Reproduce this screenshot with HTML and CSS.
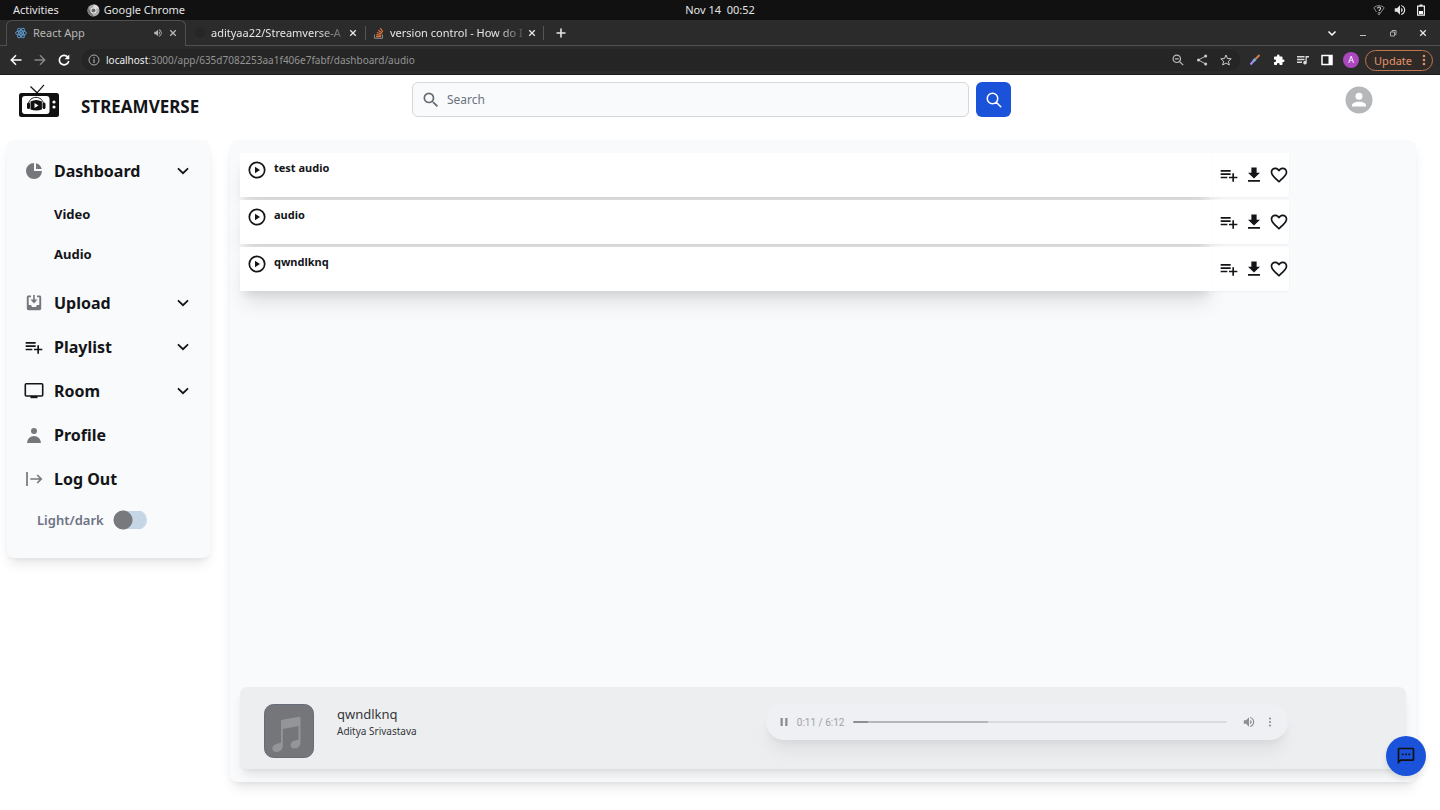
FILE: index.html
```
<!DOCTYPE html>
<html lang="en">
<head>
<meta charset="utf-8">
<meta name="viewport" content="width=device-width, initial-scale=1">
<title>Streamverse</title>
<link rel="stylesheet" href="styles.css">
</head>
<body>
<svg class="sprite" aria-hidden="true">
  <symbol id="close" viewBox="0 0 10 10"><path d="M1.500 1.500l7 7M8.500 1.500l-7 7" stroke="currentColor" stroke-width="1.600" fill="none"/></symbol>
  <symbol id="chevron" viewBox="0 0 20 20"><path fill="none" stroke="currentColor" stroke-width="1.800" stroke-linecap="round" d="M5.500 7.800l4.500 4.400 4.500-4.400"/></symbol>
  <symbol id="playlist-add" viewBox="0 0 24 24"><path fill="currentColor" d="M14 10H2v2h12v-2zm0-4H2v2h12V6zm4 8v-4h-2v4h-4v2h4v4h2v-4h4v-2h-4zM2 16h8v-2H2v2z"/></symbol>
  <symbol id="download" viewBox="0 0 24 24"><path fill="currentColor" d="M20 9h-4.500V2h-7v7H4l8 7.500L20 9zM4 18.500V21h16v-2.500H4z"/></symbol>
  <symbol id="heart" viewBox="0 0 24 24"><path fill="currentColor" d="M16.500 3c-1.740 0-3.410.810-4.500 2.090C10.910 3.810 9.240 3 7.500 3 4.420 3 2 5.420 2 8.500c0 3.780 3.400 6.860 8.550 11.540L12 21.350l1.450-1.320C18.600 15.360 22 12.280 22 8.500 22 5.420 19.580 3 16.500 3zm-4.400 15.550l-.1.100-.1-.1C7.140 14.240 4 11.390 4 8.500 4 6.500 5.500 5 7.500 5c1.540 0 3.040.990 3.570 2.360h1.870C13.460 5.990 14.960 5 16.500 5c2 0 3.500 1.500 3.500 3.500 0 2.890-3.140 5.740-7.900 10.050z"/></symbol>
  <symbol id="play-circle" viewBox="0 0 20 20"><circle cx="10" cy="10" r="7.700" fill="none" stroke="currentColor" stroke-width="1.700"/><path d="M8 6.700v6.600l5-3.300z" fill="currentColor"/></symbol>
  <symbol id="volume" viewBox="0 0 24 24"><path fill="currentColor" d="M3 9v6h4l5 5V4L7 9H3zm13.500 3c0-1.770-1.020-3.290-2.500-4.030v8.050c1.480-.730 2.500-2.250 2.500-4.020zM14 3.230v2.060c2.890.860 5 3.540 5 6.710s-2.110 5.850-5 6.710v2.060c4.010-.910 7-4.490 7-8.770s-2.990-7.860-7-8.770z"/></symbol>
  <symbol id="dots" viewBox="0 0 24 24"><circle cx="12" cy="5" r="2.200"/><circle cx="12" cy="12" r="2.200"/><circle cx="12" cy="19" r="2.200"/></symbol>
</svg>

<div class="system-bar">
  <div class="system-left">
    <span>Activities</span>
    <span class="system-app"><svg class="i13" viewBox="0 0 14 14"><circle cx="7" cy="7" r="6.500" fill="#aaa"/><path d="M7 7V.5A6.500 6.500 0 0 1 13 5H7z" fill="#ddd"/><path d="M1.300 4L5 9l2 4.500A6.500 6.500 0 0 1 1.300 4z" fill="#777"/><circle cx="7" cy="7" r="3.200" fill="#eee"/><circle cx="7" cy="7" r="2.200" fill="#666"/></svg>Google Chrome</span>
  </div>
  <time>Nov 14&nbsp; 00:52</time>
  <div class="system-right">
    <svg class="i12" viewBox="0 0 12 12"><path d="M3.500 8L.8 3.700C3.700 1 8.300 1 11.200 3.700L6 11 4.800 9.400" fill="none" stroke="#999" stroke-width=".9"/><path d="M4.600 4.600c0-2 3-2 3-.2 0 1.200-1.500 1.200-1.500 2.600M6 8v1.200" fill="none" stroke="#ddd" stroke-width="1.100"/></svg>
    <svg class="i14"><use href="#volume"/></svg>
    <svg class="i12" viewBox="0 0 12 12"><path d="M4.500 1h3M2.600 2.200h6.800v9H2.600z" fill="none" stroke="#eee" stroke-width="1.200"/><path d="M4 7h4v3H4z" fill="#fff"/></svg>
  </div>
</div>

<div class="tab-strip">
  <div class="tab tab-active">
    <svg class="i12" viewBox="0 0 12 12" fill="none" stroke="#5d9fd6" stroke-width=".9"><ellipse cx="6" cy="6" rx="5.400" ry="2.100"/><ellipse cx="6" cy="6" rx="5.400" ry="2.100" transform="rotate(60 6 6)"/><ellipse cx="6" cy="6" rx="5.400" ry="2.100" transform="rotate(120 6 6)"/><circle cx="6" cy="6" r=".7" fill="#5d9fd6"/></svg>
    <span class="tab-title">React App</span>
    <svg class="i10"><use href="#volume"/></svg>
    <button class="bare" aria-label="Close React App"><svg class="i8"><use href="#close"/></svg></button>
  </div>
  <div class="tab">
    <svg class="i12" viewBox="0 0 12 12"><circle cx="6" cy="6" r="5" fill="#262626"/></svg>
    <span class="tab-title tab-fade">adityaa22/Streamverse-A</span>
    <button class="bare" aria-label="Close adityaa22"><svg class="i8"><use href="#close"/></svg></button>
  </div>
  <div class="tab tab-ruled">
    <svg class="i12" viewBox="0 0 12 12" fill="none"><path d="M1.500 7.500v3.800h8V7.500" stroke="#8a8a8a"/><path d="M3 9.600h5M3.200 7.700l5 .6M3.900 5.500l4.700 1.500M5.200 3.300l4 2.700M7.300 1l2.500 3.800" stroke="#e0713a" stroke-width="1.200"/></svg>
    <span class="tab-title tab-fade">version control - How do I</span>
    <button class="bare" aria-label="Close version control"><svg class="i8"><use href="#close"/></svg></button>
  </div>
  <button class="bare new-tab" aria-label="New tab"><svg class="i10" viewBox="0 0 10 10"><path d="M5 .5v9M.5 5h9" stroke="currentColor" stroke-width="1.600"/></svg></button>
  <div class="window-buttons">
    <button class="bare" aria-label="Search tabs"><svg class="i10" viewBox="0 0 10 10"><path d="M1.500 3.500L5 7l3.500-3.500" fill="none" stroke="#fff" stroke-width="1.500"/></svg></button>
    <button class="bare" aria-label="Minimize"><svg class="i8" viewBox="0 0 8 8"><path d="M1 6.500h6" stroke="#bbb"/></svg></button>
    <button class="bare" aria-label="Restore"><svg class="i8" viewBox="0 0 8 8"><path d="M1.500 3h4v4h-4zM3 3V1.500h4v4H5.500" fill="none" stroke="#aaa"/></svg></button>
    <button class="bare" aria-label="Close window"><svg class="i8"><use href="#close"/></svg></button>
  </div>
</div>

<div class="toolbar">
  <div class="toolbar-nav">
    <button class="bare" aria-label="Back"><svg class="i12" viewBox="0 0 12 12"><path d="M11.500 6H1.500M6 1.300L1.300 6 6 10.700" fill="none" stroke="#fff" stroke-width="1.500"/></svg></button>
    <button class="bare" aria-label="Forward"><svg class="i12" viewBox="0 0 12 12"><path d="M.5 6h10M6 1.300L10.700 6 6 10.700" fill="none" stroke="#888" stroke-width="1.400"/></svg></button>
    <button class="bare" aria-label="Reload"><svg class="i12" viewBox="0 0 12 12"><path d="M10 3.500A4.700 4.700 0 1 0 10.700 7" fill="none" stroke="#fff" stroke-width="1.600"/><path d="M11.300.5v4.700H6.600z" fill="#fff"/></svg></button>
  </div>
  <div class="address">
    <svg class="i12" viewBox="0 0 12 12"><circle cx="6" cy="6" r="5" fill="none" stroke="#aaa"/><path d="M6 5.300V9M6 3v1.300" stroke="#aaa" stroke-width="1.200"/></svg>
    <span class="url"><b>localhost</b>:3000/app/635d7082253aa1f406e7fabf/dashboard/audio</span>
    <svg class="i12" viewBox="0 0 12 12" fill="none" stroke="#bbb" stroke-width="1.200"><circle cx="4.800" cy="4.800" r="3.700"/><path d="M7.500 7.500l3.700 3.700M3 4.800h3.600"/></svg>
    <svg class="i12" viewBox="0 0 12 12"><path d="M9.700 2L2.500 6l7.200 4" fill="none" stroke="#bbb"/><g fill="#ccc"><circle cx="9.700" cy="2" r="1.500"/><circle cx="2.500" cy="6" r="1.500"/><circle cx="9.700" cy="10" r="1.500"/></g></svg>
    <svg class="i12" viewBox="0 0 12 12"><path d="M6 1l1.500 3.500 3.700.3-2.800 2.500.9 3.700L6 9l-3.300 2 .9-3.700L.8 4.800l3.700-.3z" fill="none" stroke="#ccc"/></svg>
  </div>
  <div class="extensions">
    <svg class="i12" viewBox="0 0 12 12"><path d="M1.500 10.500L5 6.500" stroke="#b18cf0" stroke-width="2"/><path d="M4.500 7l2-2" stroke="#6db5f5" stroke-width="2.600"/><path d="M6.500 5L10.500 1" stroke="#d9824b" stroke-width="1.800"/></svg>
    <svg class="i12" viewBox="0 0 24 24"><path fill="#fff" d="M20.500 11H19V7c0-1.100-.900-2-2-2h-4V3.500a2.500 2.500 0 0 0-5 0V5H4c-1.100 0-2 .9-2 2v3.800h1.500a2.700 2.700 0 0 1 0 5.400H2V20c0 1.100.900 2 2 2h3.800v-1.500a2.700 2.700 0 0 1 5.400 0V22H17c1.100 0 2-.9 2-2v-4h1.500a2.500 2.500 0 0 0 0-5z"/></svg>
    <svg class="i12" viewBox="0 0 24 24"><path fill="#ddd" d="M15 4H0v3h15zM15 9.500H0v3h15zM0 18h10v-3H0zM17 4v10.200a3.500 3.500 0 1 0 2.500 3.300V7H24V4z"/></svg>
    <svg class="i12" viewBox="0 0 12 12"><path d="M1 1.500h10v9H1z" fill="#222" stroke="#fff" stroke-width="1.500"/><path d="M7.500 1.500H11v9H7.500z" fill="#fff"/></svg>
    <span class="account">A</span>
    <button class="update">Update<svg class="i14"><use href="#dots" fill="currentColor"/></svg></button>
  </div>
</div>

<header class="app-header">
  <a class="brand" href="#">
    <svg class="logo" viewBox="0 0 40 34"><path d="M11.500 2.500l6.500 6.300 7-8" fill="none" stroke="#111" stroke-width="1.200"/><rect y="9" width="40" height="24" rx="2.500" fill="#111"/><rect x="3" y="12" width="27.500" height="18" rx="3" fill="#fff"/><path d="M9.500 21C9.500 10.800 24.500 10.800 24.500 21" fill="none" stroke="#222"/><rect x="8" y="18.500" width="3" height="6.500" rx="1.500" fill="#111"/><rect x="23.500" y="18.500" width="3" height="6.500" rx="1.500" fill="#111"/><path d="M11.500 17.500q5.700-3 11.400 0v8q-5.700 2-11.400 0z" fill="#111"/><path d="M15.500 19v5l4-2.500z" fill="#fff"/><circle cx="35" cy="18" r="1.600" fill="#fff"/><circle cx="35" cy="23" r="1.600" fill="#fff"/></svg>
    <span>STREAMVERSE</span>
  </a>
  <form class="search">
    <label class="search-field">
      <svg class="i20" viewBox="0 0 24 24"><path fill="#666b72" d="M15.500 14h-.790l-.280-.270A6.470 6.470 0 0 0 16 9.500 6.500 6.500 0 1 0 9.500 16c1.610 0 3.090-.590 4.230-1.570l.270.280v.790l5 4.990L20.490 19l-4.990-5zm-6 0C7.010 14 5 11.990 5 9.500S7.010 5 9.500 5 14 7.010 14 9.500 11.990 14 9.500 14z"/></svg>
      <input type="text" placeholder="Search" aria-label="Search">
    </label>
    <button class="search-button" type="button" aria-label="Run search"><svg class="i18" viewBox="0 0 24 24"><path d="M21 21l-6-6m2-5a7 7 0 11-14 0 7 7 0 0114 0z" fill="none" stroke="#fff" stroke-width="2" stroke-linecap="round"/></svg></button>
  </form>
  <button class="bare avatar" aria-label="Account"><svg class="i28" viewBox="0 0 28 28"><circle cx="14" cy="14" r="13.500" fill="#b5b7b9"/><circle cx="14" cy="10.300" r="3.500" fill="#fff"/><path d="M7 20.500v-1.300c0-4.700 14-4.700 14 0v1.300z" fill="#fff"/></svg></button>
</header>

<div class="app-body">
  <nav class="sidebar">
    <button class="nav-row"><svg class="i20 gray" viewBox="0 0 20 20"><path fill="currentColor" d="M2 10a8 8 0 018-8v8h8a8 8 0 11-16 0z"/><path fill="currentColor" d="M12 2.252A8.014 8.014 0 0117.748 8H12V2.252z"/></svg><span>Dashboard</span><svg class="i20"><use href="#chevron"/></svg></button>
    <div class="submenu"><a href="#">Video</a><a href="#">Audio</a></div>
    <button class="nav-row"><svg class="i20 gray" viewBox="0 0 20 20"><path fill="currentColor" d="M4.500 2.500H7v1.700H4.700V12H7l1 2h4l1-2h2.300V4.200H13V2.500h2.500c1 0 1.700.7 1.700 1.700v11.300c0 1-.7 1.700-1.700 1.700h-11c-1 0-1.700-.7-1.700-1.700V4.200c0-1 .7-1.700 1.700-1.700z"/><path fill="currentColor" d="M9.200 2h1.600v4.500H13.500L10 10.400 6.500 6.500h2.700z"/></svg><span>Upload</span><svg class="i20"><use href="#chevron"/></svg></button>
    <button class="nav-row"><svg class="i20"><use href="#playlist-add"/></svg><span>Playlist</span><svg class="i20"><use href="#chevron"/></svg></button>
    <button class="nav-row"><svg class="i20" viewBox="0 0 20 20"><rect x="1.300" y="2.700" width="17.400" height="12.300" rx="1" fill="none" stroke="currentColor" stroke-width="1.600"/><path d="M6.500 15h7v2.200h-7z" fill="currentColor"/></svg><span>Room</span><svg class="i20"><use href="#chevron"/></svg></button>
    <a class="nav-row" href="#"><svg class="i20 gray" viewBox="0 0 20 20"><path fill="currentColor" fill-rule="evenodd" d="M10 9a3 3 0 100-6 3 3 0 000 6zm-7 9a7 7 0 1114 0H3z"/></svg><span>Profile</span></a>
    <a class="nav-row" href="#"><svg class="i20 gray" viewBox="0 0 20 20"><path d="M3 3v14M6.300 10h11M13.200 6l4 4-4 4" fill="none" stroke="currentColor" stroke-width="1.700"/></svg><span>Log Out</span></a>
    <label class="theme">Light/dark<input type="checkbox"></label>
  </nav>

  <main class="panel">
    <ul class="tracks">
      <li class="track"><button class="track-main"><svg class="i20"><use href="#play-circle"/></svg><span>test audio</span></button><div class="track-actions"><button class="bare" aria-label="Add to playlist"><svg class="i20"><use href="#playlist-add"/></svg></button><button class="bare" aria-label="Download"><svg class="i18"><use href="#download"/></svg></button><button class="bare" aria-label="Like"><svg class="i20"><use href="#heart"/></svg></button></div></li>
      <li class="track"><button class="track-main"><svg class="i20"><use href="#play-circle"/></svg><span>audio</span></button><div class="track-actions"><button class="bare" aria-label="Add to playlist"><svg class="i20"><use href="#playlist-add"/></svg></button><button class="bare" aria-label="Download"><svg class="i18"><use href="#download"/></svg></button><button class="bare" aria-label="Like"><svg class="i20"><use href="#heart"/></svg></button></div></li>
      <li class="track"><button class="track-main"><svg class="i20"><use href="#play-circle"/></svg><span>qwndlknq</span></button><div class="track-actions"><button class="bare" aria-label="Add to playlist"><svg class="i20"><use href="#playlist-add"/></svg></button><button class="bare" aria-label="Download"><svg class="i18"><use href="#download"/></svg></button><button class="bare" aria-label="Like"><svg class="i20"><use href="#heart"/></svg></button></div></li>
    </ul>

    <section class="player">
      <svg class="cover" viewBox="0 0 50 54"><rect x=".5" y=".5" width="49" height="53" rx="9" fill="#74767a" stroke="#666d78"/><path d="M17 17.500q0-1.500 1.500-1.700l16.500-3q1.500 0 1.500 1.500V39q-.5 5-6 5.500c-5 0-5.500-6-.5-7.700l4.500-1.300V22L18.800 25v17q-.4 5-5.500 6c-6 .5-6.500-5.700-2-7.500l5.700-2z" fill="#939599"/></svg>
      <div class="now-playing"><strong>qwndlknq</strong><span>Aditya Srivastava</span></div>
      <div class="audio">
        <button class="bare" aria-label="Pause"><svg class="i12" viewBox="0 0 12 12"><path d="M2.500 2h2.300v8H2.500zM7.200 2h2.300v8H7.200z" fill="currentColor"/></svg></button>
        <span class="audio-time">0:11 / 6:12</span>
        <input class="seek" type="range" min="0" max="372" value="11" aria-label="Seek">
        <button class="bare" aria-label="Mute"><svg class="i14"><use href="#volume"/></svg></button>
        <button class="bare" aria-label="More options"><svg class="i12"><use href="#dots" fill="currentColor"/></svg></button>
      </div>
    </section>
  </main>
</div>

<button class="chat" aria-label="Open chat"><svg class="i20" viewBox="0 0 24 24"><path fill="#111" d="M20 2H4c-1.100 0-1.990.900-1.990 2L2 22l4-4h14c1.100 0 2-.9 2-2V4c0-1.100-.900-2-2-2zm0 14H5.170L4 17.170V4h16v12zM7 9h2v2H7zm4 0h2v2h-2zm4 0h2v2h-2z"/></svg></button>
</body>
</html>
```
FILE: styles.css
```
* { box-sizing: border-box; }
body {
  margin: 0;
  min-height: 100vh;
  display: flex;
  flex-direction: column;
  background: #fff;
  color: #141518;
  font-family: "Noto Sans", sans-serif;
}
button, input { font: inherit; color: inherit; }
button { cursor: pointer; }
a { color: inherit; text-decoration: none; }
svg { display: block; flex: none; }
.sprite { position: absolute; width: 0; height: 0; }
.bare { display: flex; padding: 0; border: 0; background: none; }

.i8 { width: 8px; height: 8px; }
.i10 { width: 10px; height: 10px; }
.i12 { width: 12px; height: 12px; }
.i13 { width: 13px; height: 13px; }
.i14 { width: 14px; height: 14px; }
.i18 { width: 18px; height: 18px; }
.i20 { width: 20px; height: 20px; }
.i28 { width: 28px; height: 28px; }
.gray { color: #74777c; }

/* Desktop bar */
.system-bar {
  display: grid;
  grid-template-columns: 1fr auto 1fr;
  align-items: center;
  height: 20px;
  padding: 0 13px;
  background: #111;
  color: #e4e4e4;
  font-size: 11px;
  line-height: 20px;
}
.system-left, .system-right, .system-app { display: flex; align-items: center; }
.system-left { gap: 28px; }
.system-app { gap: 4px; }
.system-right { justify-content: flex-end; gap: 8px; }

/* Browser tabs */
.tab-strip {
  display: flex;
  align-items: stretch;
  height: 26px;
  padding: 0 13px 0 6px;
  background: #2b2b2b;
  border-bottom: 1px solid #505050;
  color: #e6e6e6;
  font-size: 11px;
}
.tab {
  display: flex;
  align-items: center;
  gap: 5px;
  width: 179px;
  padding: 0 8px;
}
.tab-active {
  width: 180px;
  margin-bottom: -1px;
  padding-bottom: 2px;
  gap: 6px;
  border: 1px solid #505050;
  border-bottom: 0;
  border-radius: 6px 6px 0 0;
  background: #2b2b2b;
  color: #b8b8b8;
}
.tab-title { flex: 1; white-space: nowrap; }
.tab-fade { mask-image: linear-gradient(to right, #000 80%, rgba(0, 0, 0, .2)); }
.tab-ruled {
  background: linear-gradient(#555, #555) left center / 1px 14px no-repeat,
    linear-gradient(#555, #555) right center / 1px 14px no-repeat;
}
.new-tab { align-items: center; margin-left: 12px; }
.window-buttons { display: flex; align-items: center; gap: 22px; margin-left: auto; }

/* Address row */
.toolbar {
  display: flex;
  align-items: center;
  height: 29px;
  padding: 0 7px 0 10px;
  background: #2b2b2b;
  border-bottom: 1px solid #1c1c1c;
}
.toolbar-nav { display: flex; gap: 12px; }
.address {
  display: flex;
  flex: 1;
  align-items: center;
  gap: 12px;
  height: 22px;
  margin-left: 12px;
  padding: 0 8px 0 6px;
  border-radius: 11px;
  background: #252525;
  color: #949494;
  font-size: 10px;
}
.url { flex: 1; margin-left: -6px; white-space: nowrap; }
.url b { color: #f0f0f0; font-weight: 400; }
.extensions { display: flex; align-items: center; gap: 12px; margin-left: 9px; }
.account {
  width: 16px;
  margin-left: -2px;
  border-radius: 50%;
  background: #ab47bc;
  color: #fff;
  font-size: 9px;
  line-height: 16px;
  text-align: center;
}
.update {
  display: flex;
  align-items: center;
  gap: 5px;
  height: 21px;
  margin-left: -6px;
  padding: 0 1px 0 8px;
  border: 1px solid #c07650;
  border-radius: 11px;
  background: #302a27;
  color: #e0936a;
  font-size: 11px;
}

/* Application header */
.app-header {
  display: grid;
  grid-template-columns: 1fr 599px 1fr;
  align-items: start;
  padding: 7px 36px 22px 19px;
}
.brand {
  display: flex;
  align-items: center;
  gap: 22px;
  padding-top: 2px;
  font-size: 17px;
  font-weight: 700;
  line-height: 22px;
}
.brand span { padding-top: 12px; }
.logo { width: 40px; height: 34px; }
.search { display: flex; gap: 7px; }
.search-field {
  display: flex;
  flex: 1;
  align-items: center;
  gap: 6px;
  height: 35px;
  padding: 0 8px;
  border: 1px solid #d5d8dc;
  border-radius: 6px;
  background: #f9fafb;
}
.search-field input {
  flex: 1;
  min-width: 0;
  padding: 0;
  border: 0;
  outline: 0;
  background: none;
  font-size: 12px;
}
.search-field input::placeholder { color: #6b7280; opacity: 1; }
.search-button {
  display: grid;
  place-items: center;
  width: 35px;
  height: 35px;
  padding: 0;
  border: 0;
  border-radius: 6px;
  background: #1b52da;
}
.avatar { justify-self: end; margin-right: 31px; padding-top: 4px; }

/* Layout below the header */
.app-body {
  display: flex;
  flex: 1;
  align-items: flex-start;
  gap: 20px;
  padding: 0 24px 28px 7px;
}
.sidebar, .panel {
  border-radius: 7px;
  background: #f9fafc;
  box-shadow: 0 8px 13px -3px rgba(0, 0, 0, .1), 0 3px 5px -2px rgba(0, 0, 0, .06);
}
.sidebar {
  display: flex;
  flex-direction: column;
  flex: none;
  gap: 8px;
  width: 203px;
  padding: 13px 17px 23px;
}
.nav-row {
  display: flex;
  align-items: center;
  gap: 10px;
  width: 100%;
  height: 36px;
  padding: 0;
  border: 0;
  background: none;
  font-size: 16px;
  font-weight: 700;
  text-align: left;
}
.nav-row span { flex: 1; }
.submenu {
  display: flex;
  flex-direction: column;
  gap: 6px;
  padding: 0 0 6px 30px;
  font-size: 13px;
  font-weight: 700;
  line-height: 34px;
}
.theme {
  display: flex;
  align-items: center;
  gap: 9px;
  height: 30px;
  padding-left: 13px;
  color: #6b7280;
  font-size: 13px;
  font-weight: 600;
}
.theme input {
  appearance: none;
  width: 34px;
  height: 20px;
  margin: 0;
  border-radius: 10px;
  background: radial-gradient(circle at 10px 10px, #77797d 9px, transparent 10px),
    linear-gradient(#c5d6e6, #c5d6e6) right center / 24px 18px no-repeat;
}

/* Main panel */
.panel {
  display: flex;
  flex: 1;
  flex-direction: column;
  justify-content: space-between;
  align-self: stretch;
  min-width: 0;
  padding: 13px 10px;
}
.tracks {
  display: flex;
  flex-direction: column;
  gap: 3px;
  width: 90%;
  margin: 0;
  padding: 0;
  list-style: none;
}
.track { display: flex; height: 44px; }
.track-main {
  display: flex;
  flex: 1;
  align-items: flex-start;
  gap: 7px;
  padding: 7px;
  border: 0;
  background: #fff;
  box-shadow: 0 16px 20px -4px rgba(0, 0, 0, .1), 0 7px 8px -4px rgba(0, 0, 0, .09);
  font-size: 11px;
  font-weight: 700;
  line-height: 16px;
}
.track-actions {
  display: flex;
  align-items: center;
  justify-content: flex-end;
  gap: 6px;
  width: 76px;
  background: #fff;
  box-shadow: 0 1px 2px rgba(0, 0, 0, .05);
}
.player {
  display: flex;
  align-items: flex-start;
  height: 82px;
  padding: 17px 118px 0 24px;
  border-radius: 7px;
  background: #edeef0;
  box-shadow: 0 8px 12px -3px rgba(0, 0, 0, .1), 0 3px 5px -2px rgba(0, 0, 0, .06);
}
.cover { width: 50px; height: 54px; }
.now-playing { flex: 1; margin-left: 23px; color: #34363a; }
.now-playing strong { display: block; font-size: 13px; font-weight: 400; line-height: 20px; }
.now-playing span { display: block; font-size: 10px; line-height: 15px; }
.audio {
  display: flex;
  align-items: center;
  width: 51%;
  height: 36px;
  padding: 0 12px;
  border-radius: 18px;
  background: #eff0f4;
  box-shadow: 0 14px 18px -3px rgba(0, 0, 0, .06), 0 5px 7px -3px rgba(0, 0, 0, .06);
  color: #8e8f92;
}
.audio-time { margin: 0 9px 0 7px; color: #a0a1a4; font-family: Roboto, sans-serif; font-size: 10px; }
.seek {
  appearance: none;
  flex: 1;
  height: 2px;
  min-width: 0;
  margin: 0 15px 0 0;
  border-radius: 1px;
  background: linear-gradient(to right, #8e8f92 4%, #b5b6b9 4%, #b5b6b9 36%, #dadbde 36%);
}
.seek::-webkit-slider-thumb { appearance: none; width: 2px; height: 2px; }
.audio .bare + .bare { margin-left: 8px; }

/* Floating chat button */
.chat {
  position: fixed;
  right: 14px;
  bottom: 34px;
  display: grid;
  place-items: center;
  width: 40px;
  height: 40px;
  padding: 0;
  border: 0;
  border-radius: 50%;
  background: #1b52da;
  box-shadow: 0 4px 6px rgba(0, 0, 0, .1);
}
```
